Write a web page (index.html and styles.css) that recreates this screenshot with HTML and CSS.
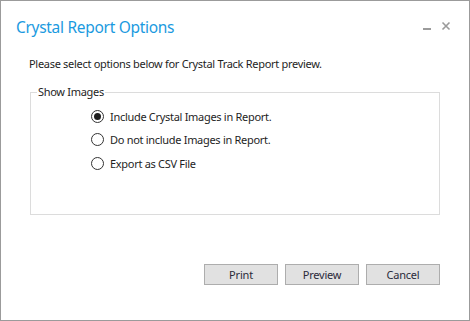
FILE: index.html
```html
<!DOCTYPE html>
<html lang="en">
  <head>
    <meta charset="utf-8" />
    <title>Crystal Report Options</title>
    <link rel="stylesheet" href="styles.css">
  </head>
  <body>
    <div class="window">
      <header class="titlebar">
        <h1 class="title">Crystal Report Options</h1>
        <div class="controls">
          <svg class="ctl" width="10" height="10" viewBox="0 0 10 10">
            <rect x="1" y="7" width="8" height="2" fill="#9b9b9b" />
          </svg>
          <svg class="ctl" width="10" height="10" viewBox="0 0 10 10">
            <path d="M1.5 1.5 L8.5 8.5 M8.5 1.5 L1.5 8.5" stroke="#9b9b9b" stroke-width="1.6" />
          </svg>
        </div>
      </header>

      <p class="intro">Please select options below for Crystal Track Report preview.</p>

      <fieldset class="group">
        <legend>Show Images</legend>
        <label class="option">
          <span class="radio checked"></span>
          Include Crystal Images in Report.
        </label>
        <label class="option">
          <span class="radio"></span>
          Do not include Images in Report.
        </label>
        <label class="option">
          <span class="radio"></span>
          Export as CSV File
        </label>
      </fieldset>

      <div class="actions">
        <button class="btn">Print</button>
        <button class="btn">Preview</button>
        <button class="btn">Cancel</button>
      </div>
    </div>
  </body>
</html>
```

FILE: styles.css
```css
html,
body {
  margin: 0;
  padding: 0;
  background: #fff;
}

*,
:after,
:before {
  box-sizing: border-box;
}

.window {
  display: flex;
  flex-direction: column;
  width: 470px;
  height: 321px;
  border: 1px solid #9b9b9b;
  background: #fff;
  font-family: "Noto Sans", "Open Sans", sans-serif;
  font-size: 11px;
  letter-spacing: -0.3px;
  color: #1e1e1e;
}

.titlebar {
  display: flex;
  align-items: flex-start;
  justify-content: space-between;
  height: 54px;
  padding: 13px 18px 0 15px;
}

.title {
  margin: 0;
  font-size: 15.5px;
  font-weight: normal;
  letter-spacing: -0.3px;
  line-height: 26px;
  color: #1b9ae0;
}

.controls {
  display: flex;
  gap: 9px;
  padding-top: 7px;
}

.intro {
  margin: 0;
  padding-left: 28px;
  line-height: 18px;
}

.group {
  margin: 11px 29px 0 29px;
  padding: 0 0 0 6px;
  height: 131px;
  border: 1px solid #dcdcdc;
}

.group legend {
  padding: 0 1px;
  line-height: 16px;
}

.option {
  display: flex;
  align-items: center;
  gap: 6px;
  height: 23.3px;
  margin-left: 54px;
}

.option:first-of-type {
  margin-top: 5px;
}

.radio {
  width: 13px;
  height: 13px;
  border: 1px solid #333;
  border-radius: 50%;
  display: flex;
  align-items: center;
  justify-content: center;
}

.radio.checked:after {
  content: "";
  width: 7px;
  height: 7px;
  border-radius: 50%;
  background: #1e1e1e;
}

.actions {
  display: flex;
  justify-content: flex-end;
  gap: 7px;
  margin-top: 49px;
  padding-right: 29px;
}

.btn {
  width: 74px;
  height: 21px;
  padding: 0;
  border: 1px solid #adadad;
  background: #e1e1e1;
  font-family: inherit;
  font-size: 11px;
  letter-spacing: -0.2px;
  color: #2a2a3a;
}
```
